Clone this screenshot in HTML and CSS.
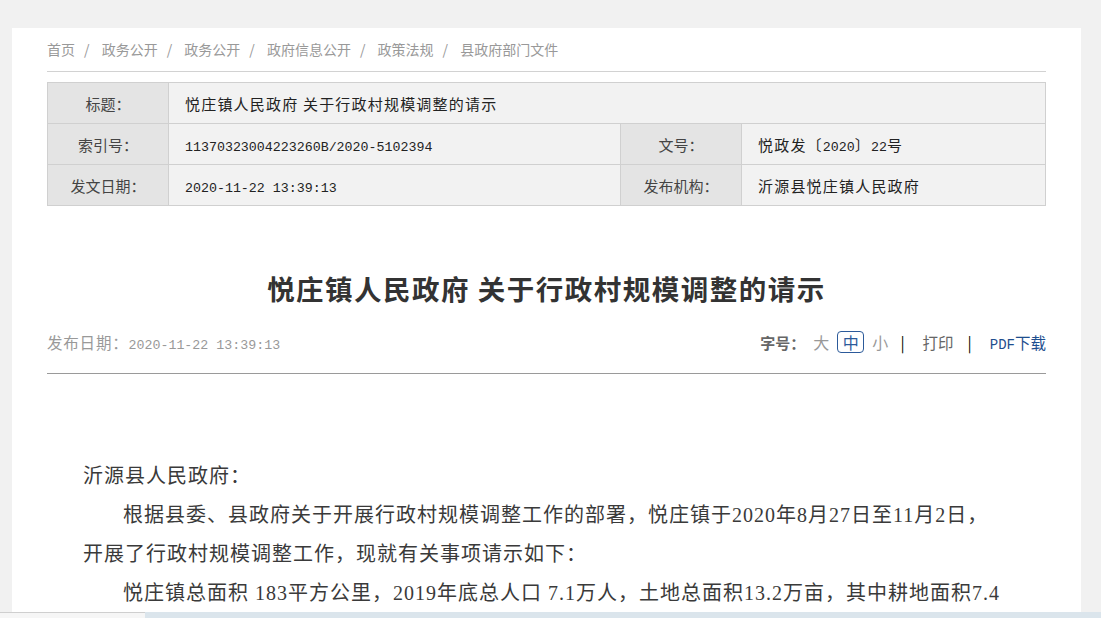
FILE: index.html
```html
<!DOCTYPE html>
<html lang="zh-CN">
<head>
  <meta charset="UTF-8" />
  <meta name="viewport" content="width=device-width, initial-scale=1.0"/>
  <title>悦庄镇人民政府 关于行政村规模调整的请示</title>
  <link rel="stylesheet" href="styles.css">
</head>
<body>

  <div class="panel">
    <!-- breadcrumb -->
    <div class="crumbs">
      <a href="#">首页</a><span class="sep">/</span>
      <a href="#">政务公开</a><span class="sep">/</span>
      <a href="#">政务公开</a><span class="sep">/</span>
      <a href="#">政府信息公开</a><span class="sep">/</span>
      <a href="#">政策法规</a><span class="sep">/</span>
      <a href="#">县政府部门文件</a>
    </div>

    <!-- info table -->
    <table class="info">
      <tr>
        <td class="label">标题：</td>
        <td class="value" colspan="3">悦庄镇人民政府 关于行政村规模调整的请示</td>
      </tr>
      <tr>
        <td class="label">索引号：</td>
        <td class="value wide"><span class="num">11370323004223260B/2020-5102394</span></td>
        <td class="label">文号：</td>
        <td class="value">悦政发〔<span class="num">2020</span>〕<span class="num">22</span>号</td>
      </tr>
      <tr>
        <td class="label">发文日期：</td>
        <td class="value wide"><span class="num">2020-11-22 13:39:13</span></td>
        <td class="label">发布机构：</td>
        <td class="value">沂源县悦庄镇人民政府</td>
      </tr>
    </table>

    <h1 class="title">悦庄镇人民政府 关于行政村规模调整的请示</h1>

    <div class="meta">
      <span class="date">发布日期：<span class="num">2020-11-22 13:39:13</span></span>
      <div class="tools">
        <span class="size-label">字号：</span>
        <a href="#" class="size">大</a>
        <a href="#" class="size on">中</a>
        <a href="#" class="size">小</a>
        <span class="bar">|</span>
        <a href="#" class="print">打印</a>
        <span class="bar">|</span>
        <a href="#" class="pdf"><span class="num">PDF</span>下载</a>
      </div>
    </div>

    <div class="content">
      <p class="no-indent">沂源县人民政府：</p>
      <p>根据县委、县政府关于开展行政村规模调整工作的部署，悦庄镇于2020年8月27日至11月2日，开展了行政村规模调整工作，现就有关事项请示如下：</p>
      <p>悦庄镇总面积 183平方公里，2019年底总人口 7.1万人，土地总面积13.2万亩，其中耕地面积7.4万亩。</p>
    </div>
  </div>

  <!-- strip along the bottom edge of the window -->
  <div class="bottom-strip">
    <div class="strip-left"></div>
    <div class="strip-right"></div>
  </div>

</body>
</html>
```

FILE: styles.css
```css
body {
  margin: 0;
  background: #f1f1f1;
  font-family: "Noto Sans CJK SC", sans-serif;
  color: #333;
}

a {
  text-decoration: none;
  color: inherit;
}

/* half-width digits are fixed-width on the original page */
.num {
  font-family: "Liberation Mono", "Noto Sans CJK SC", monospace;
  font-size: 13.3px;
  letter-spacing: 0;
}

.panel {
  margin: 28px 20px 0 12px;
  background: #fff;
  padding: 0 35px 40px;
}

/* breadcrumb */
.crumbs {
  padding: 11px 0 12px;
  line-height: 20px;
  font-size: 14px;
  color: #999;
  border-bottom: 1px solid #d2d2d2;
}

.crumbs .sep {
  padding: 0 9px;
}

/* info table */
.info {
  width: 100%;
  margin-top: 10px;
  border-collapse: collapse;
  font-size: 15px;
}

.info td {
  height: 40px;
  border: 1px solid #d0d0d0;
  padding: 0;
}

.info .label {
  width: 120px;
  background: #e4e4e4;
  text-align: center;
  color: #444;
}

.info .value {
  background: #f2f2f2;
  padding-left: 16px;
  color: #222;
  letter-spacing: 1.2px;
}

.info .wide {
  width: 435px;
}

/* title */
.title {
  margin: 62px 0 0;
  text-align: center;
  font-size: 27.5px;
  line-height: 40px;
  font-weight: bold;
  letter-spacing: 1.5px;
  color: #333;
}

.meta {
  margin-top: 23px;
  padding-bottom: 20px;
  border-bottom: 1px solid #9a9a9a;
  display: flex;
  justify-content: space-between;
  align-items: center;
  height: 22px;
  font-size: 15.5px;
}

.meta .date {
  color: #999;
  letter-spacing: 0.8px;
}

.tools {
  display: flex;
  align-items: center;
}

.size-label {
  color: #666;
  font-weight: bold;
  font-size: 15px;
}

.size {
  color: #999;
  font-size: 16px;
  margin-left: 8px;
}

.size.on {
  border: 1px solid #2c5a9a;
  border-radius: 4px;
  color: #2c5a9a;
  width: 25px;
  height: 20px;
  line-height: 20px;
  text-align: center;
}

.bar {
  color: #000;
  margin: 0 18px 0 12px;
}

.print {
  color: #666;
  margin-right: 2px;
}

.pdf {
  color: #1e4e8e;
}

.pdf .num {
  font-size: 14px;
}

/* article body */
.content {
  padding: 83px 40px 0 36px;
  font-family: "Liberation Serif", "Noto Sans CJK SC", serif;
  font-size: 20px;
  line-height: 39px;
  letter-spacing: 1px;
  color: #3a3a3a;
}

.content p {
  margin: 0;
  text-indent: 2em;
}

.content p.no-indent {
  text-indent: 0;
}

.bottom-strip {
  position: fixed;
  left: 0;
  right: 0;
  bottom: 0;
  height: 6px;
  display: flex;
}

.strip-left {
  width: 145px;
  background: #f6f6f6;
  border-top: 1px solid #cfcfcf;
}

.strip-right {
  flex: 1;
  background: #dbe5ec;
}
```
